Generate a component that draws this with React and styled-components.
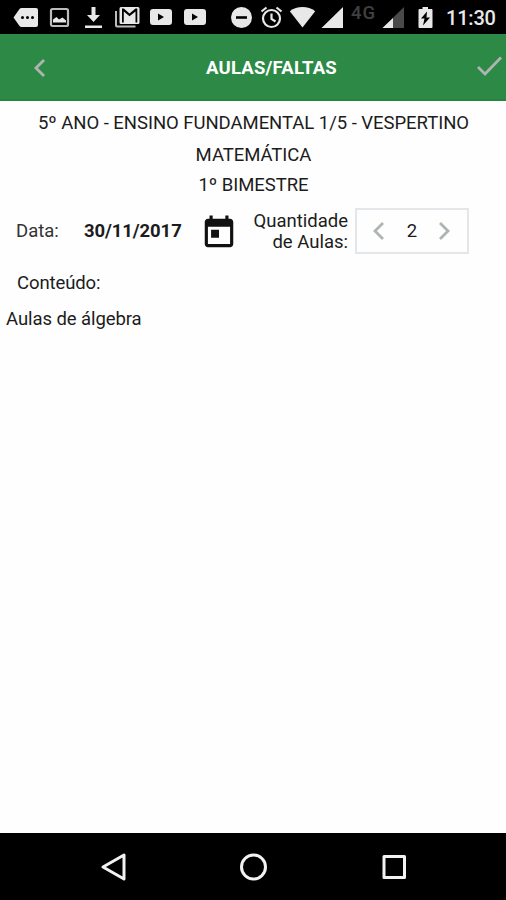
import React from 'react'
import styled, { createGlobalStyle } from 'styled-components'


const GlobalStyle = createGlobalStyle`
    * {
        box-sizing: border-box;
    }

    body {
        margin: 0;
        background-color: #fefefe;
        color: #1c1c1c;
        font-family: Roboto, "Liberation Sans", sans-serif;
    }
`

const Screen = styled.div`
    display: flex;
    flex-direction: column;
    height: 900px;
    width: 506px;
    overflow: hidden;
`

const StatusBar = styled.div`
    display: flex;
    align-items: flex-start;
    height: 34px;
    padding: 6px 0 0 13px;
    background-color: #000000;
    color: #e8e8e8;
`

const StatusIcon = styled.svg`
    flex: none;
    width: ${({ $width }) => $width}px;
    height: 23px;
    margin-right: ${({ $gap }) => $gap}px;
    color: ${({ $color }) => $color || 'inherit'};
    fill: currentColor;
`

const Network = styled.span`
    width: 28px;
    margin-right: 2px;
    margin-top: -3px;
    color: #404040;
    font-size: 18.5px;
    font-weight: 500;
    line-height: 21px;
    letter-spacing: 1px;
`

const Clock = styled.span`
    font-size: 20px;
    font-weight: 500;
    line-height: 25px;
    letter-spacing: -0.2px;
    white-space: nowrap;
`

const Header = styled.header`
    display: grid;
    grid-template-columns: 80px 1fr 44px;
    align-items: center;
    height: 67px;
    border-bottom: 2px solid #258440;
    background-color: #2c8a46;
`

const Title = styled.h1`
    margin: 2px 0 0;
    padding-left: 1px;
    color: #ffffff;
    font-size: 18.5px;
    font-weight: 700;
    line-height: 24px;
    letter-spacing: 0.2px;
    text-align: center;
    white-space: nowrap;
`

const IconButton = styled.button`
    display: flex;
    justify-content: ${({ $align }) => $align || 'center'};
    align-items: center;
    padding: 0;
    border: 0;
    background: none;
    color: #b0b4b1;
    cursor: pointer;

    svg {
        display: block;
        fill: none;
        stroke: currentColor;
        stroke-width: 2.8;
    }
`

const BackButton = styled(IconButton)`
    padding-top: 2px;
`

const Content = styled.main`
    flex: 1;
    padding-top: 10px;
`

const Info = styled.p`
    margin: 0 0 ${({ $gap }) => $gap || 0}px;
    padding-left: 1px;
    font-size: 18.5px;
    line-height: 24px;
    letter-spacing: -0.04px;
    text-align: center;
    white-space: nowrap;
`

const FormRow = styled.div`
    display: flex;
    align-items: center;
    height: 46px;
    margin-top: 11px;
    padding-left: 16px;

    > svg {
        margin-top: 3px;
    }
`

const Label = styled.label`
    width: 68px;
    font-size: 18.5px;
    line-height: 24px;
    color: #333333;
`

const DateValue = styled.strong`
    width: 116px;
    font-size: 18.5px;
    font-weight: 700;
    line-height: 24px;
    letter-spacing: -0.1px;
`

const AmountLabel = styled.label`
    width: 110px;
    margin-top: 1px;
    font-size: 18.5px;
    line-height: 21px;
    text-align: right;
`

const Stepper = styled.div`
    display: grid;
    grid-template-columns: 1fr 22px 1fr;
    align-items: center;
    width: 114px;
    height: 46px;
    margin-left: 7px;
    border: 2px solid #e3e7e9;
    font-size: 18.5px;
    text-align: center;
`

const FieldLabel = styled.label`
    display: block;
    margin: 17px 0 0 17px;
    font-size: 18.5px;
    line-height: 24px;
    letter-spacing: -0.1px;
`

const FieldText = styled.p`
    margin: 12px 0 0 6px;
    font-size: 18.5px;
    line-height: 24px;
    letter-spacing: -0.08px;
`

const NavBar = styled.nav`
    display: grid;
    grid-template-columns: 28px 28px 28px;
    column-gap: 112px;
    align-items: center;
    height: 67px;
    padding-left: 100px;
    background-color: #000000;

    svg {
        display: block;
        fill: none;
        stroke: #f2f2f2;
        stroke-width: 3;
        stroke-linejoin: round;
    }
`

const Chevron = ({ next }) => (
    <svg width="14" height="20" viewBox="0 0 14 20">
        <path d={next ? 'M2 2l8 8-8 8' : 'M11 2l-8 8 8 8'} />
    </svg>
)

const CalendarIcon = () => (
    <svg width="38" height="38" viewBox="0 0 24 24" fill="#111111">
        <path d="M19 3h-1V1h-2v2H8V1H6v2H5c-1.1 0-2 .9-2 2v14c0 1.1.9 2 2 2h14c1.1 0 2-.9 2-2V5c0-1.1-.9-2-2-2zm0 16H5V8h14v11zM7 10h5v5H7z" />
    </svg>
)

const Youtube = ({ gap }) => (
    <StatusIcon $width={24} $gap={gap} viewBox="0 0 24 23">
        <path fillRule="evenodd" d="M4 3h16q3 0 3 3v10q0 3-3 3H4q-3 0-3-3V6q0-3 3-3zm5 4.5v7l6-3.5z" />
    </StatusIcon>
)

const Status = () => (
    <StatusBar>
        <StatusIcon $width={26} $gap={10} viewBox="0 0 26 23">
            <path d="M.5 11.500 6.500 3q.8-1 2-1H23q2 0 2 2v15q0 2-2 2H8.500q-1.200 0-2-1z" />
            <g fill="#000000">
                <circle cx="9.500" cy="11.500" r="1.500" />
                <circle cx="14.500" cy="11.500" r="1.500" />
                <circle cx="19.500" cy="11.500" r="1.500" />
            </g>
        </StatusIcon>
        <StatusIcon $width={21} $gap={14} $color="#bcbcbc" viewBox="0 0 21 23">
            <rect x="2" y="3" width="17" height="17" rx="1.500" fill="none" stroke="currentColor" strokeWidth="2.200" />
            <path fill="#e8e8e8" d="M4 16.500v-3l3.500-2.500 2.500 2.500 3.500-2 3.500 3v2z" />
        </StatusIcon>
        <StatusIcon $width={19} $gap={11} viewBox="0 0 19 23">
            <path d="M7.500 1h4v8h4.500l-6.500 7L3 9h4.500zM1 19.500h17v2.500H1z" />
        </StatusIcon>
        <StatusIcon $width={26} $gap={9} viewBox="0 0 26 23">
            <path fill="#bcbcbc" d="M1 5h2v14.500h18.500v2H3q-2 0-2-2z" />
            <path fillRule="evenodd" d="M7 1h17q1.500 0 1.500 1.500v14q0 1.500-1.500 1.500H7q-1.500 0-1.500-1.500v-14Q5.500 1 7 1zm1 1.500v14h1.800v-11l5.700 4.800 6-4.800v11h1.800v-14h-1.800l-6 5-5.700-5z" />
        </StatusIcon>
        <Youtube gap={10} />
        <Youtube gap={23} />
        <StatusIcon $width={23} $gap={7} viewBox="0 0 23 23">
            <circle cx="11.500" cy="11.500" r="10.500" />
            <path fill="#000000" d="M6 10.200h11v2.600H6z" />
        </StatusIcon>
        <StatusIcon $width={23} $gap={6} viewBox="0 0 23 23">
            <g fill="none" stroke="currentColor" strokeWidth="2.200">
                <circle cx="11.500" cy="12.500" r="8.500" />
                <path d="M11.500 7.500v5.500l4 2.500M1.500 5.500 6.500 1.500M21.500 5.500l-5-4" />
            </g>
        </StatusIcon>
        <StatusIcon $width={27} $gap={4} viewBox="0 0 27 23">
            <path d="M13.500 21.500.8 5.200Q6.500 1 13.500 1t12.700 4.200z" />
        </StatusIcon>
        <StatusIcon $width={24} $gap={7} viewBox="0 0 24 23">
            <path d="M23 1v21H1.500z" />
        </StatusIcon>
        <Network>4G</Network>
        <StatusIcon $width={24} $gap={12} viewBox="0 0 24 23">
            <path fill="#4a4a4a" d="M23 1v21H1.500z" />
            <path d="M12 12v10H1.500z" />
        </StatusIcon>
        <StatusIcon $width={17} $gap={12} viewBox="0 0 17 23">
            <path fillRule="evenodd" d="M5.500 1h5.500v2h3.500q1 0 1 1v17q0 1-1 1h-12q-1 0-1-1V4q0-1 1-1h3zm4.500 4.500L4 12.500h3.500L6 19.500 13 11.500H9.500z" />
        </StatusIcon>
        <Clock>11:30</Clock>
    </StatusBar>
)

const App = () => (
    <>
        <GlobalStyle />
        <Screen>
            <Status />
            <Header>
                <BackButton aria-label="Voltar">
                    <Chevron />
                </BackButton>
                <Title>AULAS/FALTAS</Title>
                <IconButton aria-label="Salvar" $align="flex-end">
                    <svg width="30" height="22" viewBox="0 0 30 22">
                        <path d="M2 11l7 7L25 1.500" />
                    </svg>
                </IconButton>
            </Header>
            <Content>
                <Info $gap={8}>5º ANO - ENSINO FUNDAMENTAL 1/5 - VESPERTINO</Info>
                <Info $gap={6}>MATEMÁTICA</Info>
                <Info>1º BIMESTRE</Info>
                <FormRow>
                    <Label>Data:</Label>
                    <DateValue>30/11/2017</DateValue>
                    <CalendarIcon />
                    <AmountLabel>Quantidade<br />de Aulas:</AmountLabel>
                    <Stepper>
                        <IconButton aria-label="Diminuir"><Chevron /></IconButton>
                        <span>2</span>
                        <IconButton aria-label="Aumentar"><Chevron next /></IconButton>
                    </Stepper>
                </FormRow>
                <FieldLabel>Conteúdo:</FieldLabel>
                <FieldText>Aulas de álgebra</FieldText>
            </Content>
            <NavBar>
                <svg width="28" height="30" viewBox="0 0 28 30">
                    <path d="M3 15 24 3v24z" />
                </svg>
                <svg width="28" height="30" viewBox="0 0 28 30">
                    <circle cx="13.500" cy="15" r="12" />
                </svg>
                <svg width="28" height="30" viewBox="0 0 28 30">
                    <path d="M4 4.500h20.500v21h-20.500z" />
                </svg>
            </NavBar>
        </Screen>
    </>
)

export default App
